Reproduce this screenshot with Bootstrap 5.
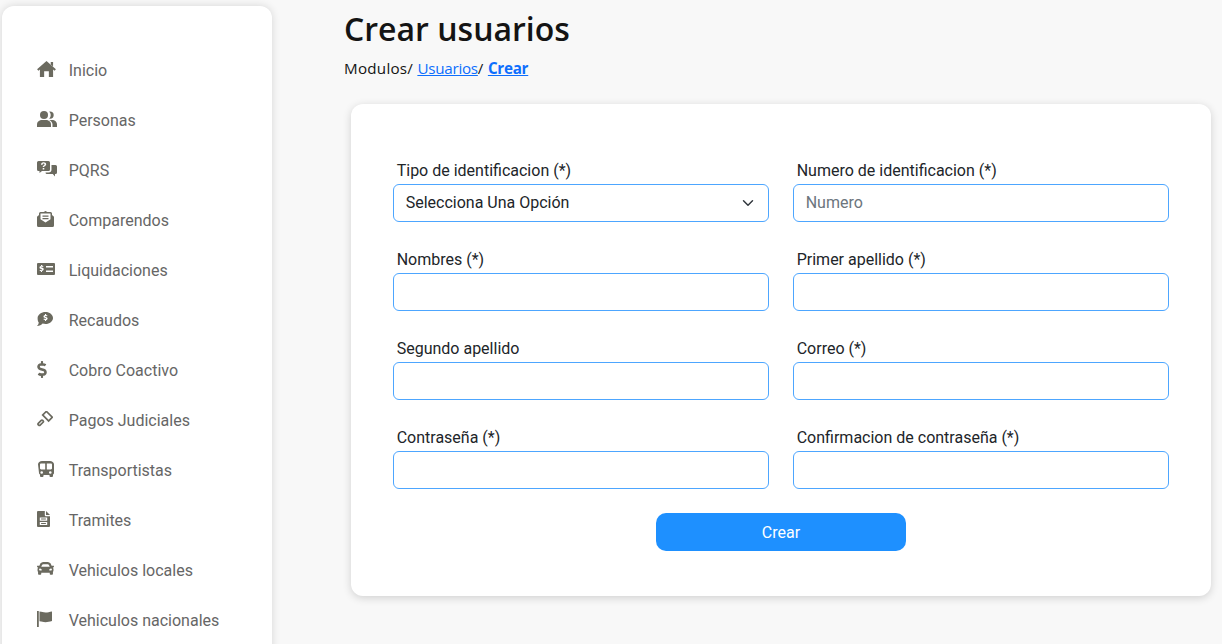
<!doctype html>
<html lang="es">
<head>
<meta charset="utf-8">
<title>Crear usuarios</title>
<link rel="stylesheet" href="https://cdn.jsdelivr.net/npm/bootstrap@5.3.0/dist/css/bootstrap.min.css">
<style>
html,body{height:100%;overflow:hidden}
body{background:#f8f8f8;font-family:Roboto,sans-serif;color:#212529}
.app-shell{height:644px;overflow:hidden}
.side-panel{width:270px;margin:6px 0 0 2px;padding:39px 0 0 35px;flex:none;background:#fff;border-radius:12px 12px 0 0;box-shadow:0 0 8px rgba(0,0,0,.14);height:720px}
.side-link{height:50px;color:#666;font-size:16px;text-decoration:none;padding-top:1px}
.side-icon{width:31.7px;flex:none;display:flex;align-items:center;margin-bottom:3px}
.side-icon svg{fill:#6b6a5f;display:block}
.side-icon svg .hollow{fill:none;stroke:#6b6a5f;stroke-width:1.7}
.main-area{padding-left:72px;width:950px}
.page-title{font-family:"Open Sans",sans-serif;font-weight:600;font-size:32px;line-height:44px;margin:7px 0 0;color:#141414}
.crumbs{font-family:"Open Sans",sans-serif;font-size:15.2px;line-height:24px;margin:5px 0 0;color:#141414;letter-spacing:.25px}
.crumbs a{color:#0d6efd;letter-spacing:-.25px}
.form-panel{margin:24px 0 0 7px;width:860px;height:492px;padding:55px 42px 0;background:#fff;border-radius:12px;box-shadow:0 2px 8px rgba(0,0,0,.16)}
.field-label{display:block;font-size:16px;line-height:24px;margin:0 0 1px;padding-left:3.7px;color:#212529}
.field-input{height:38px;border:1px solid #4da6ff;border-radius:6px;font-family:Roboto,sans-serif;font-size:16px;padding-left:11.7px}
input.field-input{padding-bottom:8px}
.field-input::placeholder{color:#6c757d}
.send-btn{width:250px;height:38px;background:#1e90ff;border:0;border-radius:10px;color:#fff;font-size:16px;padding:2px 0 0;margin-top:-2px}
.form-grid{--bs-gutter-y:26px}
.nudge-bus{margin-left:1px}
</style>
</head>
<body>
<div class="app-shell d-flex">
  <nav class="side-panel">
    <a class="side-link d-flex align-items-center" href="#"><span class="side-icon"><svg width="19" height="16" viewBox="0 0 20 17"><path d="M10 0 20 8.800 18.600 10.400 17 9V17H12.500V11H7.500V17H3V9L1.400 10.400 0 8.800Z"/><path d="M14.500 1H17V5.800L14.500 3.600Z"/></svg></span>Inicio</a>
    <a class="side-link d-flex align-items-center" href="#"><span class="side-icon"><svg width="20" height="16" viewBox="0 0 20 16"><circle cx="7" cy="4" r="4"/><path d="M0 16v-2.500C0 10.500 2.500 9 5 9h4c2.500 0 5 1.500 5 4.500V16z"/><path d="M12.200 .4h.8a3.700 3.700 0 0 1 0 7.400h-.8a5.200 5.200 0 0 0 0-7.400zM12.500 9h2.500c3 0 5 2 5 4.500V16h-4.500v-2.500c0-1.800-1.200-3.500-3.500-4.500z"/></svg></span>Personas</a>
    <a class="side-link d-flex align-items-center" href="#"><span class="side-icon"><svg width="20" height="16" viewBox="0 0 20 16"><path fill-rule="evenodd" d="M1.500 0h10A1.500 1.500 0 0 1 13 1.500v7a1.500 1.500 0 0 1-1.500 1.500H5l-2.500 2v-2h-1A1.500 1.500 0 0 1 0 8.500v-7A1.500 1.500 0 0 1 1.500 0zM4 3.800h1.600c0-.8.4-1.200 1-1.200s1 .3 1 .8-.4.700-.9 1c-.7.400-1 .800-1 1.700h1.500c0-.5.200-.7.700-1 .8-.4 1.300-1 1.300-1.800C9.200 2 8.100 1.200 6.600 1.200 5 1.200 4 2.200 4 3.800zM5.700 7h1.600v1.500H5.700z"/><path d="M14.500 4h4A1.500 1.500 0 0 1 20 5.500v6a1.500 1.500 0 0 1-1.500 1.500H18v2.500L15.800 13H10a1.500 1.500 0 0 1-1.500-1.500h3a3 3 0 0 0 3-3z"/></svg></span>PQRS</a>
    <a class="side-link d-flex align-items-center" href="#"><span class="side-icon"><svg width="17" height="16" viewBox="0 0 17 16"><path fill-rule="evenodd" d="M6.700 1 8.500 0l1.800 1H13.500a1.500 1.500 0 0 1 1.500 1.500V4L17 5.800V14.500a1.500 1.500 0 0 1-1.500 1.500h-14A1.500 1.500 0 0 1 0 14.500V5.800L2 4V2.500A1.500 1.500 0 0 1 3.500 1zM3.500 2.500v5.800L8.500 11.500l5-3.200V2.500zM5.500 4.500h6v1.200h-6zM5.500 7h6v1.200h-6z"/></svg></span>Comparendos</a>
    <a class="side-link d-flex align-items-center" href="#"><span class="side-icon"><svg width="18" height="12" viewBox="0 0 18 12"><path fill-rule="evenodd" d="M1 0h16a1 1 0 0 1 1 1v10a1 1 0 0 1-1 1H1a1 1 0 0 1-1-1V1a1 1 0 0 1 1-1zm8 3v1.500h7V3zm0 4.500V9h7V7.500zM4 2v1.100c-1 .2-1.500.8-1.500 1.500 0 1 .8 1.300 1.800 1.600.6.200.9.300.9.600 0 .3-.3.400-.7.400-.5 0-1-.2-1.400-.5l-.6.900c.4.300 1 .6 1.500.7V9h1V7.900c1-.2 1.700-.8 1.700-1.600 0-1-.8-1.400-1.800-1.700-.6-.2-.9-.3-.9-.5 0-.3.300-.4.700-.4s.8.100 1.200.4l.6-.9c-.4-.3-.9-.500-1.500-.6V2z"/></svg></span>Liquidaciones</a>
    <a class="side-link d-flex align-items-center" href="#"><span class="side-icon"><svg width="16" height="14" viewBox="0 0 16 14"><path fill-rule="evenodd" d="M8.500 0C12.600 0 16 2.700 16 6s-3.400 6-7.500 6c-1 0-2-.2-2.900-.5C4.400 12.800 2.500 14 0 14c1-1 1.600-2 1.800-3.200C1 9.700.6 7.900.6 6 .6 2.700 4.400 0 8.500 0zM8 2v.9c-.9.2-1.500.7-1.500 1.500 0 1 .8 1.300 1.700 1.600.6.200.8.300.8.500s-.2.400-.6.400c-.5 0-1-.2-1.400-.5l-.6.900c.5.300 1 .5 1.600.6V9h1.100v-.9c.9-.2 1.500-.8 1.500-1.600 0-.9-.7-1.300-1.700-1.600-.6-.2-.8-.3-.8-.5s.2-.4.600-.4.800.1 1.200.4l.6-.9c-.4-.3-.9-.5-1.400-.6V2z"/></svg></span>Recaudos</a>
    <a class="side-link d-flex align-items-center" href="#"><span class="side-icon"><svg width="10" height="17" viewBox="0 0 288 512"><path d="M209.200 233.400l-108-31.600C88.700 198.200 80 186.500 80 173.500c0-16.300 13.200-29.500 29.500-29.500h66.300c12.200 0 24.200 3.700 34.200 10.500 6.100 4.100 14.300 3.100 19.500-2l34.800-34c7.100-6.900 6.100-18.400-1.800-24.500C238 74.800 207.400 64.100 176 64V16c0-8.800-7.200-16-16-16h-32c-8.800 0-16 7.200-16 16v48h-2.500C45.800 64-5.400 118.700.5 183.600c4.200 46.100 39.400 83.600 83.800 96.600l102.500 30c12.500 3.700 21.200 15.300 21.200 28.300 0 16.300-13.200 29.500-29.500 29.500h-66.300C100 368 88 364.300 78 357.500c-6.100-4.100-14.300-3.100-19.500 2l-34.800 34c-7.100 6.900-6.100 18.400 1.800 24.500 24.500 19.200 55.100 29.900 86.500 30v48c0 8.800 7.200 16 16 16h32c8.800 0 16-7.200 16-16v-48.200c46.600-.9 90.300-28.600 105.700-72.700 21.500-61.600-14.600-124.800-72.500-141.700z"/></svg></span>Cobro Coactivo</a>
    <a class="side-link d-flex align-items-center" href="#"><span class="side-icon"><svg width="16" height="16" viewBox="0 0 16 16"><rect class="hollow" x="6.300" y="2.600" width="8.400" height="5.200" transform="rotate(45 10.500 5.200)"/><rect class="hollow" x=".6" y="10.500" width="6.200" height="2.600" rx="1" transform="rotate(-45 3.700 11.800)"/></svg></span>Pagos Judiciales</a>
    <a class="side-link d-flex align-items-center" href="#"><span class="side-icon"><svg class="nudge-bus" width="16" height="16" viewBox="0 0 16 16"><path fill-rule="evenodd" d="M4 0h8c2 0 4 1.300 4 3.200V12c0 .8-.4 1.300-1 1.600V15a1 1 0 0 1-1 1h-1.500a1 1 0 0 1-1-1v-1H5.500v1a1 1 0 0 1-1 1H3a1 1 0 0 1-1-1v-1.400c-.6-.3-1-.8-1-1.600L0 3.200C0 1.300 2 0 4 0zM3.200 2.500c-.8 0-1.200.5-1.200 1.200v3.600c0 .7.400 1.200 1.200 1.200h4V2.500zm5.600 0v6h4c.8 0 1.200-.5 1.200-1.200V3.700c0-.7-.4-1.200-1.200-1.200zM3.700 10.200a1.300 1.300 0 1 0 0 2.600 1.300 1.300 0 0 0 0-2.600zm8.600 0a1.300 1.300 0 1 0 0 2.600 1.300 1.300 0 0 0 0-2.600z"/></svg></span>Transportistas</a>
    <a class="side-link d-flex align-items-center" href="#"><span class="side-icon"><svg width="13" height="16" viewBox="0 0 13 16"><path fill-rule="evenodd" d="M1 0h6.800v4.200a1 1 0 0 0 1 1H13V15a1 1 0 0 1-1 1H1a1 1 0 0 1-1-1V1a1 1 0 0 1 1-1zm1.800 6.500v3.200h7.400V6.500zm1.300 1.100h4.800v1H4.100zM2.800 11v3h7.400v-3zm1.300 1h4.800v1H4.100z"/><path d="M9 0 13 4H9z"/></svg></span>Tramites</a>
    <a class="side-link d-flex align-items-center" href="#"><span class="side-icon"><svg width="17" height="15" viewBox="0 0 512 448"><path transform="translate(0 -64)" d="M499.990 176h-59.870l-16.640-41.600C406.380 91.630 365.570 64 319.500 64h-127c-46.060 0-86.880 27.630-103.990 70.400L71.870 176H12.010C4.200 176-1.530 183.340.37 190.910l6 24C7.700 220.250 12.500 224 18.010 224h20.070C24.650 235.730 16 252.780 16 272v48c0 16.120 6.160 30.670 16 41.930V416c0 17.670 14.330 32 32 32h32c17.670 0 32-14.330 32-32v-32h256v32c0 17.670 14.330 32 32 32h32c17.670 0 32-14.330 32-32v-54.070c9.840-11.250 16-25.800 16-41.930v-48c0-19.220-8.650-36.270-22.070-48H494c5.510 0 10.310-3.750 11.640-9.090l6-24c1.890-7.570-3.840-14.910-11.650-14.910zm-352.060-17.830c7.290-18.220 24.940-30.170 44.570-30.170h127c19.630 0 37.280 11.950 44.570 30.170L384 208H128l19.930-49.830zM96 319.800c-19.200 0-32-12.760-32-31.900S76.800 256 96 256s48 28.710 48 47.850-28.800 15.950-48 15.950zm320 0c-19.200 0-48 3.190-48-15.950S396.800 256 416 256s32 12.760 32 31.900-12.800 31.900-32 31.900z"/></svg></span>Vehiculos locales</a>
    <a class="side-link d-flex align-items-center" href="#"><span class="side-icon"><svg width="15" height="16" viewBox="0 0 15 16"><path d="M0 0h1.800v16H0z"/><path d="M2.500 .6C5 .6 6 1.600 8.500 1.600c2.200 0 4-.7 6.500-1.100V10c-2.500.7-4.300 1.200-6.500 1.200-2.500 0-3.500-1-6-1z"/></svg></span>Vehiculos nacionales</a>
  </nav>
  <main class="main-area">
    <h1 class="page-title">Crear usuarios</h1>
    <p class="crumbs">Modulos/ <a href="#">Usuarios</a>/ <a href="#" class="fw-bold">Crear</a></p>
    <div class="form-panel">
      <form>
        <div class="row form-grid">
          <div class="col-6"><label class="field-label">Tipo de identificacion (*)</label><select class="form-select field-input"><option>Selecciona Una Opción</option></select></div>
          <div class="col-6"><label class="field-label">Numero de identificacion (*)</label><input class="form-control field-input" placeholder="Numero"></div>
          <div class="col-6"><label class="field-label">Nombres (*)</label><input class="form-control field-input"></div>
          <div class="col-6"><label class="field-label">Primer apellido (*)</label><input class="form-control field-input"></div>
          <div class="col-6"><label class="field-label">Segundo apellido</label><input class="form-control field-input"></div>
          <div class="col-6"><label class="field-label">Correo (*)</label><input class="form-control field-input"></div>
          <div class="col-6"><label class="field-label">Contraseña (*)</label><input class="form-control field-input"></div>
          <div class="col-6"><label class="field-label">Confirmacion de contraseña (*)</label><input class="form-control field-input"></div>
          <div class="col-12 d-flex justify-content-center"><button type="button" class="btn send-btn">Crear</button></div>
        </div>
      </form>
    </div>
  </main>
</div>
<script src="https://cdn.jsdelivr.net/npm/bootstrap@5.3.0/dist/js/bootstrap.bundle.min.js"></script>
</body>
</html>
